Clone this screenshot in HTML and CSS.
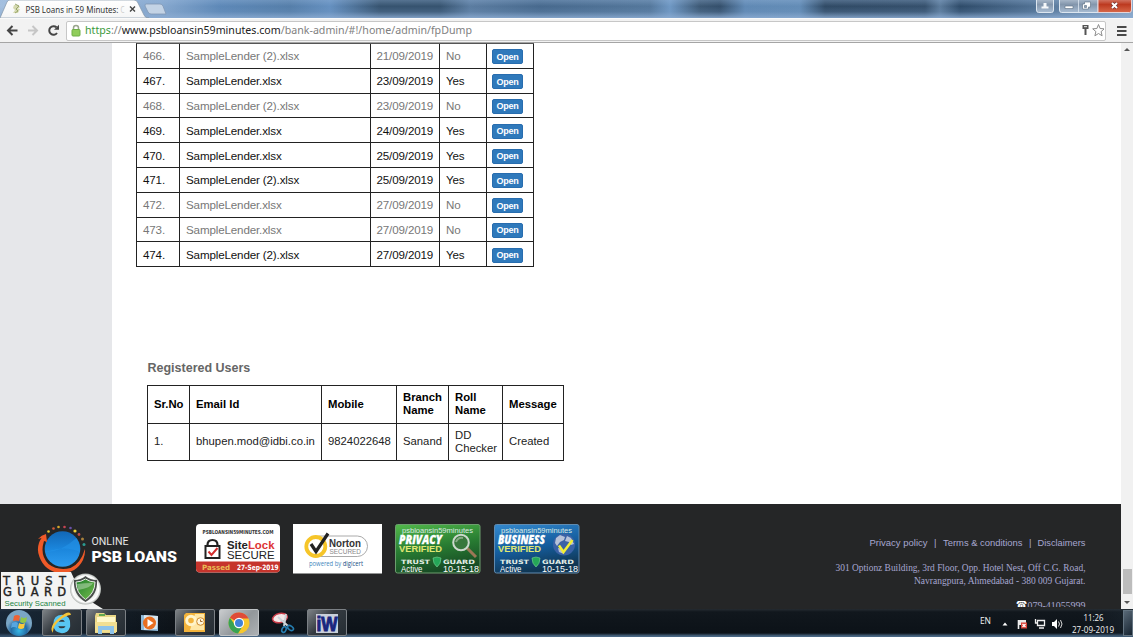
FILE: index.html
```html
<!DOCTYPE html>
<html lang="en">
<head>
<meta charset="utf-8">
<title>PSB Loans in 59 Minutes</title>
<link rel="stylesheet" href="styles.css">
</head>
<body>
<div class="screen">
  <header class="titlebar">
    <svg class="tabs" width="180" height="18" viewBox="0 0 180 18">
      <defs><linearGradient id="tabg" x2="0" y2="1"><stop offset="0" stop-color="#fff"/><stop offset="1" stop-color="#f4f5f6"/></linearGradient></defs>
      <path d="M0 18L7 2Q8 0 10 0H134Q137 0 138 3L144 15Q145 18 149 18Z" fill="url(#tabg)" stroke="#8295a8" stroke-width=".7"/>
      <path d="M146 4H160Q162 4 163 6L166 14H151Q149 14 148 12L145 6Q145 4 146 4Z" fill="#c3d3e5" stroke="#8097b4" stroke-width=".8"/>
      <path d="M14 5h4l2 2-2 2h2l-2 4h-5l2-3-2-2z" fill="#d5d9b0"/><path d="M15 4l4 2-3 3 2 2-3 2" fill="none" stroke="#98a66c"/>
      <text x="25.500" y="12.500" textLength="93" lengthAdjust="spacingAndGlyphs" class="tab-title">PSB Loans in 59 Minutes:</text>
      <text x="120.500" y="12.500" textLength="4" lengthAdjust="spacingAndGlyphs" class="tab-title tab-fade">C</text>
      <path d="M130 6.500l5 5m0-5l-5 5" stroke="#444" stroke-width="1.400"/>
    </svg>
    <svg class="window-buttons" width="100" height="14" viewBox="0 0 100 14">
      <defs><linearGradient id="wb" x2="0" y2="1"><stop offset="0" stop-color="#b7c5d5"/><stop offset=".45" stop-color="#8396ac"/><stop offset="1" stop-color="#a9bdd3"/></linearGradient>
      <linearGradient id="wr" x2="0" y2="1"><stop offset="0" stop-color="#d9897a"/><stop offset=".45" stop-color="#bd3a20"/><stop offset="1" stop-color="#d8694a"/></linearGradient></defs>
      <path d="M3.500-2h17V10q0 2.500-2 2.500h-13q-2 0-2-2.500z" fill="url(#wb)" stroke="#dce6f0"/>
      <path d="M26.500-2H65V12.500H28.500q-2 0-2-2.500z" fill="url(#wb)" stroke="#dce6f0"/>
      <path d="M45.500 0v12" stroke="#dce6f0" stroke-width=".8"/>
      <path d="M65-2H98.500V10q0 2.500-2 2.500H65z" fill="url(#wr)" stroke="#e6d5d8"/>
      <path d="M8.500 6.500h7v2h-7zM10.500 3h3v3.500h-3z" fill="#f6f8fa"/><path d="M32 6h8v2.500h-8z" fill="#fff" stroke="#596b80" stroke-width=".6"/>
      <path d="M51.500 2h6v5h-2v2h-6V4h2zM51.500 5.500h2v2h-2z" fill="#fff" fill-rule="evenodd" stroke="#596b80" stroke-width=".6"/>
      <path d="M79 3l5 5m0-5l-5 5" stroke="#6f3030" stroke-width="3.300"/><path d="M79 3l5 5m0-5l-5 5" stroke="#fff" stroke-width="2"/>
    </svg>
  </header>
  <nav class="toolbar">
    <svg width="64" height="24" viewBox="0 0 64 24">
      <path d="M17.500 11.500H8m4.500-4.500L8 11.500l4.500 4.500" fill="none" stroke="#454545" stroke-width="2"/>
      <path d="M28 11.500h9m-4.500-4.500L37 11.500l-4.500 4.500" fill="none" stroke="#c6c6c6" stroke-width="2"/>
      <path d="M56.500 8.300A4.300 4.300 0 1 0 57 14" fill="none" stroke="#454545" stroke-width="2"/><path d="M54 10.800h5V5.800z" fill="#454545"/>
    </svg>
    <div class="address">
      <svg width="12" height="14" viewBox="0 0 12 14"><path d="M3.500 6V4q0-2.500 2.500-2.500T8.500 4v2" fill="none" stroke="#9aa58d" stroke-width="1.500"/><rect x="2" y="5.500" width="8" height="6.500" rx="1" fill="#90cd5b" stroke="#6faf46"/></svg>
      <svg class="url" width="394" height="18" viewBox="0 0 394 18"><text x="0" y="12" textLength="387" lengthAdjust="spacingAndGlyphs"><tspan class="scheme">https</tspan><tspan class="path">://</tspan><tspan class="host">www.psbloansin59minutes.com</tspan><tspan class="path">/bank-admin/#!/home/admin/fpDump</tspan></text></svg>
      <svg class="address-icons" width="32" height="18" viewBox="0 0 32 18"><path d="M10.500 3h6v4h-2v6h-2V7h-2z" fill="#555"/><path d="M12 4.700h3" stroke="#fff" stroke-width=".9"/><path d="M27 2.500l1.600 4 4.200.3-3.200 2.800 1 4.200-3.600-2.300-3.600 2.300 1-4.200-3.200-2.800 4.200-.3z" transform="translate(-.5 0)" fill="#fff" stroke="#8c8c8c"/></svg>
    </div>
    <svg class="menu-icon" width="12" height="16" viewBox="0 0 12 16"><path d="M1 4h9.500M1 8h9.500M1 12h9.500" stroke="#494949" stroke-width="2.200"/></svg>
  </nav>
  <div class="viewport">
    <div class="page">
      <div class="body-row">
        <aside class="sidebar"></aside>
        <main class="main">
          <div class="dump">
            <div class="row muted"><span>466.</span><span>SampleLender (2).xlsx</span><span>21/09/2019</span><span>No</span><span><button class="open">Open</button></span></div>
            <div class="row"><span>467.</span><span>SampleLender.xlsx</span><span>23/09/2019</span><span>Yes</span><span><button class="open">Open</button></span></div>
            <div class="row muted"><span>468.</span><span>SampleLender (2).xlsx</span><span>23/09/2019</span><span>No</span><span><button class="open">Open</button></span></div>
            <div class="row"><span>469.</span><span>SampleLender.xlsx</span><span>24/09/2019</span><span>Yes</span><span><button class="open">Open</button></span></div>
            <div class="row"><span>470.</span><span>SampleLender.xlsx</span><span>25/09/2019</span><span>Yes</span><span><button class="open">Open</button></span></div>
            <div class="row"><span>471.</span><span>SampleLender (2).xlsx</span><span>25/09/2019</span><span>Yes</span><span><button class="open">Open</button></span></div>
            <div class="row muted"><span>472.</span><span>SampleLender.xlsx</span><span>27/09/2019</span><span>No</span><span><button class="open">Open</button></span></div>
            <div class="row muted"><span>473.</span><span>SampleLender.xlsx</span><span>27/09/2019</span><span>No</span><span><button class="open">Open</button></span></div>
            <div class="row"><span>474.</span><span>SampleLender (2).xlsx</span><span>27/09/2019</span><span>Yes</span><span><button class="open">Open</button></span></div>
          </div>
          <h2 class="heading">Registered Users</h2>
          <div class="users">
            <div class="urow uhead"><span>Sr.No</span><span>Email Id</span><span>Mobile</span><span>Branch<br>Name</span><span>Roll<br>Name</span><span>Message</span></div>
            <div class="urow"><span>1.</span><span>bhupen.mod@idbi.co.in</span><span>9824022648</span><span>Sanand</span><span>DD<br>Checker</span><span>Created</span></div>
          </div>
        </main>
      </div>
      <footer class="footer">
        <svg class="brand" width="145" height="56" viewBox="0 0 145 56">
          <defs><linearGradient id="globe" x2="0" y2="1"><stop offset="0" stop-color="#1267b6"/><stop offset=".5" stop-color="#1b86dc"/><stop offset="1" stop-color="#2d9cf0"/></linearGradient></defs>
          <g transform="translate(-1.500 -1)">
          <circle cx="27" cy="28" r="17.800" fill="url(#globe)"/><path d="M9.500 31Q24 32 41 17Q45 23 44.500 31Q30 24 9.500 31Z" fill="#2393e8" opacity=".6"/>
          <path d="M6 17Q0 26 4 36Q9 50 25 52.500Q41 52 47.500 39Q50 33 49.500 28Q45 43 35 47Q22 50 13 43Q4 34 8.500 20L11.500 21L10.500 13Q6 14 2.500 18Z" fill="#f05a28"/>
          <circle cx="13" cy="10.500" r="1.300" fill="#e7c22d"/><circle cx="18" cy="7.500" r="1.300" fill="#d05b38"/><circle cx="23" cy="6" r="1.300" fill="#d7a629"/><circle cx="29" cy="6" r="1.300" fill="#c64453"/><circle cx="35" cy="7" r="1.300" fill="#6a51a8"/><circle cx="39.500" cy="10" r="1.600" fill="#efcf37"/><circle cx="43.500" cy="13.500" r="1.400" fill="#bd4a45"/><circle cx="47" cy="18" r="1.500" fill="#a9803b"/><circle cx="48.500" cy="23.500" r="1.500" fill="#2b9b92"/>
          </g>
          <text x="54.500" y="22.800" textLength="37" lengthAdjust="spacingAndGlyphs" class="brand-small">ONLINE</text>
          <text x="54.500" y="39.500" textLength="85.500" lengthAdjust="spacingAndGlyphs" class="brand-big">PSB LOANS</text>
        </svg>
        <svg class="badge sitelock" width="84" height="50" viewBox="0 0 84 50">
          <clipPath id="slc"><rect width="84" height="48.500" rx="4"/></clipPath>
          <g clip-path="url(#slc)"><rect width="84" height="50" fill="#fff"/><rect y="37.500" width="84" height="12" fill="#c6342c"/></g>
          <text x="6.500" y="9.800" textLength="71" lengthAdjust="spacingAndGlyphs" class="domain">PSBLOANSIN59MINUTES.COM</text>
          <path d="M11.500 23v-2q0-5 5-5t5 5v2" fill="none" stroke="#222" stroke-width="2.200"/><rect x="9.500" y="22" width="14" height="12" fill="#fff" stroke="#222" stroke-width="2"/><path d="M12.500 27.500l3 3.500 6-7" fill="none" stroke="#d32f2f" stroke-width="2"/>
          <text x="31" y="24.500" textLength="47.500" lengthAdjust="spacingAndGlyphs" class="lock">Site<tspan fill="#d33">Lock</tspan></text>
          <text x="31" y="34.500" textLength="47.500" lengthAdjust="spacingAndGlyphs" class="secure">SECURE</text>
          <text x="6" y="45.500" textLength="28" lengthAdjust="spacingAndGlyphs" class="passed">Passed</text>
          <text x="41" y="45.500" textLength="41.500" lengthAdjust="spacingAndGlyphs" class="passed white">27-Sep-2019</text>
        </svg>
        <svg class="badge norton" width="89" height="50" viewBox="0 0 89 50">
          <rect width="89" height="49.500" fill="#fff"/><rect x="17" y="12" width="57.500" height="20.500" rx="10.200" fill="#fff" stroke="#aaa"/>
          <circle cx="22.800" cy="22.500" r="9.500" fill="#fff" stroke="#f6c529" stroke-width="3.800"/><path d="M18 20l5 7.500L35 9.500" fill="none" stroke="#222" stroke-width="3.200"/>
          <text x="36" y="22.800" textLength="32" lengthAdjust="spacingAndGlyphs" class="norton-name">Norton</text><text x="36.500" y="30" textLength="31.500" lengthAdjust="spacingAndGlyphs" class="norton-sub">SECURED</text>
          <text x="16" y="41.500" textLength="54" lengthAdjust="spacingAndGlyphs" class="digicert">powered by <tspan fill="#174d84">digicert</tspan></text>
        </svg>
        <svg class="badge privacy" width="86" height="51" viewBox="0 0 86 51">
          <defs><linearGradient id="green" x2=".3" y2="1"><stop offset="0" stop-color="#52b94b"/><stop offset=".55" stop-color="#287c32"/><stop offset="1" stop-color="#184d25"/></linearGradient></defs>
          <rect x=".5" y=".5" width="84.500" height="48.500" rx="2" fill="url(#green)" stroke="#6d9e6e"/>
          <text x="7" y="8.500" textLength="71" lengthAdjust="spacingAndGlyphs" class="seal-site">psbloansin59minutes</text>
          <path d="M72 24l9 9" stroke="#9c7756" stroke-width="3"/><circle cx="66" cy="18.500" r="7.800" fill="#38773c" stroke="#ccd8cd" stroke-width="2"/><path d="M61 18q2-5 7-4" stroke="#87ab86" stroke-width="2" fill="none"/>
          <text x="4" y="19.500" textLength="43" lengthAdjust="spacingAndGlyphs" class="seal-name">PRIVACY</text><text x="4" y="28" textLength="43" lengthAdjust="spacingAndGlyphs" class="verified">VERIFIED</text>
          <text x="6" y="40" textLength="29" lengthAdjust="spacingAndGlyphs" class="trust">TRUST</text><path d="M38 34l4-1 4 1q0 6-4 9-4-3-4-9z" fill="#25a758" stroke="#79d494" stroke-width=".6"/><text x="48" y="40" textLength="32" lengthAdjust="spacingAndGlyphs" class="trust">GUARD</text>
          <text x="6" y="47.500" textLength="21.500" lengthAdjust="spacingAndGlyphs" class="seal-date">Active</text><text x="48" y="47.500" textLength="36" lengthAdjust="spacingAndGlyphs" class="seal-date">10-15-18</text>
        </svg>
        <svg class="badge business" width="86" height="51" viewBox="0 0 86 51">
          <defs><linearGradient id="blue" x2=".3" y2="1"><stop offset="0" stop-color="#3389ce"/><stop offset=".55" stop-color="#155d9e"/><stop offset="1" stop-color="#103754"/></linearGradient></defs>
          <rect x=".5" y=".5" width="84.500" height="48.500" rx="2" fill="url(#blue)" stroke="#608bb0"/>
          <text x="7" y="8.500" textLength="71" lengthAdjust="spacingAndGlyphs" class="seal-site">psbloansin59minutes</text>
          <circle cx="70" cy="20.500" r="11" fill="#3b62a6"/><path d="M62 14l4-3 5 2-1 3-4 2-3 4-2-3zM73 12l4 2 3 6-3 1-2-3-4-1zM64 24l4 1 2 5-5-2z" fill="#b7c2d8"/><path d="M65 21.500l4.500 6.500 9-12" fill="none" stroke="#f3ee35" stroke-width="2.500"/>
          <text x="4" y="19.500" textLength="47" lengthAdjust="spacingAndGlyphs" class="seal-name">BUSINESS</text><text x="4" y="28" textLength="43" lengthAdjust="spacingAndGlyphs" class="verified">VERIFIED</text>
          <text x="6" y="40" textLength="29" lengthAdjust="spacingAndGlyphs" class="trust">TRUST</text><path d="M38 34l4-1 4 1q0 6-4 9-4-3-4-9z" fill="#25a758" stroke="#79d494" stroke-width=".6"/><text x="48" y="40" textLength="32" lengthAdjust="spacingAndGlyphs" class="trust">GUARD</text>
          <text x="6" y="47.500" textLength="21.500" lengthAdjust="spacingAndGlyphs" class="seal-date">Active</text><text x="48" y="47.500" textLength="36" lengthAdjust="spacingAndGlyphs" class="seal-date">10-15-18</text>
        </svg>
        <div class="legal">
          <svg class="links" width="254" height="14" viewBox="0 0 254 14"><text x="37.500" y="10" textLength="58" lengthAdjust="spacingAndGlyphs">Privacy policy</text><text x="102" y="10">|</text><text x="111" y="10" textLength="79.500" lengthAdjust="spacingAndGlyphs">Terms &amp; conditions</text><text x="197" y="10">|</text><text x="205.500" y="10" textLength="48" lengthAdjust="spacingAndGlyphs">Disclaimers</text></svg>
          <svg width="254" height="28" viewBox="0 0 254 28"><text x="3.500" y="10" textLength="250" lengthAdjust="spacingAndGlyphs">301 Optionz Building, 3rd Floor, Opp. Hotel Nest, Off C.G. Road,</text><text x="82" y="22.700" textLength="171.500" lengthAdjust="spacingAndGlyphs">Navrangpura, Ahmedabad - 380 009 Gujarat.</text></svg>
          <svg class="phone" width="72" height="6" viewBox="0 0 72 6"><text x="2" y="8" textLength="11" lengthAdjust="spacingAndGlyphs" class="phone-icon">☎</text><text x="13.500" y="8" textLength="58" lengthAdjust="spacingAndGlyphs">079-41055999</text></svg>
        </div>
      </footer>
      <svg class="trust-guard" width="103" height="37" viewBox="0 0 103 37">
        <defs><radialGradient id="halo"><stop offset=".6" stop-color="#e2e5e2"/><stop offset=".85" stop-color="#fff"/><stop offset="1" stop-color="#aeb3af"/></radialGradient><linearGradient id="shield" x2="1" y2="1"><stop offset="0" stop-color="#1e7d2b"/><stop offset="1" stop-color="#74bc4d"/></linearGradient></defs>
        <path d="M1 0H71L82 24 103 37H1Z" fill="#f3f4f3"/><circle cx="85.500" cy="17" r="15.500" fill="url(#halo)"/>
        <path d="M74 8Q81 8 85.500 4 90 8 97 8 98 23 85.500 30 73 23 74 8Z" fill="#4a4f4c"/><path d="M76 10Q81 10 85.500 7 90 10 95 10 95 21 85.500 27.500 76 21 76 10Z" fill="url(#shield)" stroke="#e7ece6"/><path d="M77 12q7-1 16-1-2 5-15 7z" fill="#b9d9b5" opacity=".55"/>
        <text x="3" y="12.500" textLength="63" class="guard-name">TRUST</text><text x="3" y="23.500" textLength="63" class="guard-name">GUARD</text><text x="4.500" y="33.700" textLength="61" lengthAdjust="spacingAndGlyphs" class="scanned">Security Scanned</text>
      </svg>
    </div>
    <div class="scrollbar"><svg width="12" height="12" viewBox="0 0 12 12"><path d="M3 8h6L6 5z" fill="#555"/></svg><div class="thumb"></div><svg width="12" height="14" viewBox="0 0 12 14"><path d="M3 6h6L6 9z" fill="#555"/></svg></div>
  </div>
  <div class="taskbar">
    <svg class="task-start" width="42" height="28" viewBox="0 0 42 28">
      <defs><radialGradient id="orb" cx=".5" cy=".8"><stop offset="0" stop-color="#36b7e5"/><stop offset=".6" stop-color="#246ca5"/><stop offset="1" stop-color="#7aa6c5"/></radialGradient></defs>
      <circle cx="19" cy="14" r="13" fill="url(#orb)"/><path d="M14 7q3-2 6 0l-1 5q-3-1-6 0z" fill="#ed6335"/><path d="M21 8q3 2 6 0l-1 5q-3 2-6 0z" fill="#92c747"/><path d="M12 14q4-2 6 0l-1 5q-3-2-6 0z" fill="#57a6df"/><path d="M19 14q3 2 6 0l-1 5q-3 2-6 0z" fill="#fac93e"/>
    </svg>
    <div class="task ie"><svg width="26" height="26" viewBox="0 0 26 26"><path d="M20.500 15.500H8.500Q9 19 13 19q2.800 0 3.800-2h3.500Q18.500 22.500 13 22.500 5 22 5 14T13 5.500q8.500.500 7.500 10zM8.500 12.500h8.200Q16 9 13 9T8.500 12.500z" fill="#58c6f2" fill-rule="evenodd" stroke="#58c6f2" stroke-width="1.300"/><path d="M4 23Q-1 17 10 8T22 5Q19 4.500 13 8.500 3 16 4 23Z" fill="#f4c438"/></svg></div>
    <div class="task explorer"><svg width="26" height="26" viewBox="0 0 26 26"><path d="M2 6l1-3h8l2 2h10v18H2z" fill="#e9d685"/><path d="M4 7h18v6H4z" fill="#fff8c9"/><path d="M6 5h6" stroke="#63a84f" stroke-width="2"/><path d="M2 12h22v10H2z" fill="#f2df91"/><path d="M5 24v-8h16v8h-4v-4H9v4z" fill="#8dc3ea"/></svg></div>
    <div class="task flat media"><svg width="20" height="20" viewBox="0 0 20 20"><path d="M1 2l17 1v15L1 17z" fill="#8fb9d8"/><path d="M4 2l14 1-1 13-13 1z" fill="#d7e6f0"/><circle cx="9.500" cy="10" r="6.500" fill="#e86e20"/><path d="M7.500 6l6 4-6 4z" fill="#fff"/></svg></div>
    <div class="task outlook"><svg width="26" height="26" viewBox="0 0 26 26"><path d="M4 3h19v19H2V5z" fill="#f3b33b"/><path d="M13 4h9v16H8z" fill="#ffe7a6"/><circle cx="9" cy="10.500" r="4.300" fill="#f3b33b" stroke="#fff4ca" stroke-width="3"/><circle cx="18.500" cy="11.500" r="3.800" fill="#fff7dc" stroke="#cf8a2d"/><path d="M18.500 9.500v2h2" stroke="#a76c2b" fill="none"/></svg></div>
    <div class="task active chrome"><svg width="24" height="24" viewBox="0 0 24 24"><circle cx="12" cy="12" r="10.500" fill="#f6c72d"/><path d="M12 12L2.900 6.700A10.500 10.500 0 0 1 21.500 7.500H12z" fill="#df4b38"/><path d="M2.900 6.700A10.500 10.500 0 0 0 11 22.500L16 14.500 12 12 8 14z" fill="#38a352"/><circle cx="12" cy="12" r="5.200" fill="#fff"/><circle cx="12" cy="12" r="4" fill="#3f82d8"/></svg></div>
    <div class="task flat snip"><svg width="26" height="24" viewBox="0 0 26 24"><ellipse cx="10" cy="7" rx="7.500" ry="4.500" transform="rotate(-12 10 7)" fill="#f4e7e7" stroke="#c83d49" stroke-width="1.500"/><path d="M8 6l10 9M16 3l-2 12" stroke="#ccd4d8" stroke-width="2"/><ellipse cx="14" cy="18.500" rx="2" ry="3" transform="rotate(25 14 18.500)" fill="none" stroke="#257db0" stroke-width="1.600"/><ellipse cx="20.500" cy="17" rx="3.300" ry="2" transform="rotate(35 20.500 17)" fill="none" stroke="#257db0" stroke-width="1.600"/></svg></div>
    <div class="task iw"><svg width="26" height="26" viewBox="0 0 26 26"><rect x="2" y="4" width="22" height="19" fill="#c9d0da"/><text x="2.500" y="21" textLength="21" lengthAdjust="spacingAndGlyphs" class="iw-text">iW</text></svg></div>
    <div class="tray"><span class="lang">EN</span>
      <svg width="62" height="22" viewBox="0 0 62 22"><path d="M1.500 12.500h5L4 9.500z" fill="#fff"/><path d="M17.500 7v9" stroke="#eee" stroke-width="1.600"/><path d="M18 7h7v5h-7z" fill="#e7e7e7"/><rect x="20" y="9.500" width="6" height="6" fill="#d84038"/><path d="M21.500 11l3 3m0-3l-3 3" stroke="#fff" stroke-width="1.200"/><path d="M36.500 7.500h7v5h-7zM38 15h5M34.500 6v4h2" fill="none" stroke="#f0f0f0" stroke-width="1.300"/><path d="M51 9h2l3-3v10l-3-3h-2z" fill="#fff"/><path d="M57.500 8.500q2 2.500 0 5M59.500 7q3 4 0 8" fill="none" stroke="#d9d9d9"/></svg>
      <svg class="clock" width="60" height="24" viewBox="0 0 60 24"><text x="20.500" y="8.800" textLength="20" lengthAdjust="spacingAndGlyphs">11:26</text><text x="9" y="20.800" textLength="42" lengthAdjust="spacingAndGlyphs">27-09-2019</text></svg><div class="show-desktop"></div>
    </div>
  </div>
</div>
</body>
</html>
```
FILE: styles.css
```css
* { box-sizing: border-box; }
body { margin: 0; font-family: "Liberation Sans", Arial, sans-serif; }
svg { display: block; flex: none; }
.screen { width: 1133px; height: 637px; display: flex; flex-direction: column; overflow: hidden; background: #fff; }
.titlebar { height: 18px; flex: none; display: flex; justify-content: space-between; align-items: flex-start; background: linear-gradient(180deg, rgba(160,190,225,.3), rgba(255,255,255,0) 35%, rgba(120,155,195,.2) 65%, rgba(140,172,210,.85)), linear-gradient(90deg, #a5c0df 0, #88a9cf 160px, #5d88b7 220px, #557ea9 290px, #6590c0 330px, #36536f 380px, #36536f 440px, #5b7ca0 470px, #47698d 540px, #54779b 650px, #6f98c4 670px, #3c5874 700px, #344f6b 720px, #6089b4 745px, #638cb6 800px, #304a65 825px, #35506c 925px, #5c7b9b 940px, #2e4b69 960px, #4f6f91 1030px, #8ba9c9 1133px); }
.titlebar .window-buttons { width: 100px; margin-left: auto; }
.tab-title { font: 9.3px "Noto Sans", "Open Sans", sans-serif; fill: #333; }
.tab-title.tab-fade { fill: #ccc; }
.toolbar { height: 25px; flex: none; display: flex; align-items: center; background: #f2f2f2; border-bottom: 1px solid #a5a5a5; border-top: 1px solid #fafafa; padding-right: 5px; }
.address { height: 20px; flex: 1; margin-left: 2px; background: #fff; border: 1px solid #c7c7c7; border-radius: 2px; display: flex; align-items: center; padding: 0 1px 0 3px; }
.url { margin-left: 3px; font: 11.3px "Noto Sans", "Open Sans", sans-serif; }
.scheme { fill: #3c9a3c; }
.host { fill: #222; }
.path { fill: #808080; }
.address-icons { margin-left: auto; }
.menu-icon { margin-left: 10px; }
.viewport { height: 566px; flex: none; display: flex; }
.page { width: 1121px; position: relative; display: flex; flex-direction: column; }
.body-row { height: 461px; display: flex; }
.sidebar { width: 112px; background: #e6e7ea; }
.main { flex: 1; padding-left: 24px; }
.dump { width: 398px; border-left: 1px solid #222; border-top: 1px solid #555; font-size: 11.6px; letter-spacing: -.14px; color: #111; }
.row { display: grid; grid-template-columns: 43px 190.500px 69.500px 47px 1fr; height: 24.800px; }
.row span { display: flex; align-items: center; padding: 0 0 0 6px; border-right: 1px solid #222; border-bottom: 1px solid #222; white-space: nowrap; }
.row.muted { color: #777; }
.open { width: 31px; height: 15px; padding: 0; border: 1px solid #286daf; border-radius: 2px; background: #2f79bb; color: #fff; font: bold 9px/12px "Liberation Sans", Arial, sans-serif; letter-spacing: -.2px; margin-top: 2px; }
.row span:last-child { padding-left: 5px; }
.heading { margin: 93px 0 0 11.500px; font-size: 12.5px; line-height: 17px; color: #666; height: 25px; }
.users { margin-left: 11px; width: 417px; border-left: 1px solid #222; border-top: 1px solid #222; font-size: 11.3px; line-height: 13px; color: #222; }
.urow { display: grid; grid-template-columns: 42px 132px 75px 52px 54px 1fr; height: 37.500px; }
.urow span { display: flex; align-items: center; padding-left: 6px; border-right: 1px solid #222; border-bottom: 1px solid #222; white-space: nowrap; }
.uhead { font-weight: bold; color: #000; }
.footer { height: 105px; background: #252627; display: flex; padding: 20px 35px 0 37px; overflow: hidden; }
.brand { margin-top: -2px; }
.brand-small { font: 10.5px Roboto, sans-serif; fill: #e5e5e5; }
.brand-big { font: 900 14px Roboto, sans-serif; fill: #fff; }
.sitelock { margin-left: 13.500px; }
.norton { margin-left: 13px; }
.privacy { margin-left: 13.500px; }
.business { margin-left: 13px; }
.domain { font: bold 5.500px "DejaVu Sans", sans-serif; fill: #333; }
.lock { font: bold 11px "Liberation Sans", sans-serif; fill: #222; }
.secure { font: 10px "Liberation Sans", sans-serif; fill: #222; }
.passed { font: bold 7.300px "DejaVu Sans", sans-serif; fill: #e9bd55; }
.passed.white { fill: #fff; }
.norton-name { font: bold 10px "Liberation Sans", sans-serif; fill: #333; }
.norton-sub { font: 7px "Liberation Sans", sans-serif; fill: #888; }
.digicert { font: 6.500px "Open Sans", sans-serif; fill: #4288bd; }
.seal-site { font: 8px "Liberation Sans", sans-serif; fill: #dcebe4; }
.seal-name { font: italic 800 12px "Open Sans", sans-serif; fill: #fff; stroke: #fff; stroke-width: .3px; }
.verified { font: bold 8.500px "Liberation Sans", sans-serif; fill: #e0e773; }
.trust { font: bold 6px "DejaVu Sans", sans-serif; fill: #e3eee6; }
.seal-date { font: 8.500px "Liberation Sans", sans-serif; fill: #fff; }
.legal { margin-left: auto; width: 254px; display: flex; flex-direction: column; font: 9.8px "Liberation Serif", serif; fill: #a7a6d1; margin-top: 12px; }
.links { font: 9.5px "Liberation Sans", Arial, sans-serif; margin-bottom: 11px; }
.phone { margin: 12px 0 0 182px; overflow: hidden; }
.phone-icon { font: 12px "DejaVu Sans", sans-serif; fill: #fff; }
.trust-guard { position: absolute; left: 0; bottom: 0; }
.guard-name { font: 11.500px "DejaVu Sans", sans-serif; fill: #222; stroke: #222; stroke-width: .4px; }
.scanned { font: 7.800px "Liberation Sans", sans-serif; fill: #218443; }
.scrollbar { width: 12px; background: #f1f1f1; display: flex; flex-direction: column; }
.thumb { width: 9px; height: 25px; background: #bcbcbc; margin: auto auto 1px; }
.taskbar { height: 28px; flex: none; display: flex; background: linear-gradient(90deg, rgba(32,57,82,.5), rgba(13,18,24,0) 170px, rgba(13,18,24,0) 1080px, rgba(41,58,72,.3)), linear-gradient(#252b31, #11171d 3px, #0c1218 24px, #496784 27px); }
.task { width: 40px; height: 27px; border: 1px solid #7b8085; border-radius: 2px; background: linear-gradient(135deg, #7d8286, #343a40 45%, #252d34); display: flex; align-items: center; justify-content: center; margin-right: 4px; overflow: hidden; }
.task.flat { background: none; border-color: transparent; }
.task.active { background: linear-gradient(135deg, #c9ccce, #92979b 55%, #adb1b4); border-color: #bec2c5; }
.explorer { margin-right: 3px; }
.media { width: 42px; }
.iw-text { font: 900 20px "Liberation Sans", sans-serif; fill: #19267e; stroke: #19267e; }
.tray { margin-left: auto; display: flex; color: #f1f1f1; fill: #f1f1f1; font: 8.500px/12px "Open Sans", sans-serif; padding-top: 2px; }
.lang { margin: 4px 10px 0 0; }
.tray svg { margin-top: 2px; }
.tray .clock { margin: 1px 0 0; }
.show-desktop { width: 10px; height: 26px; margin: -1px 0 0 0; border: 1px solid #647481; background: linear-gradient(135deg, #596977, #172431); }
```
